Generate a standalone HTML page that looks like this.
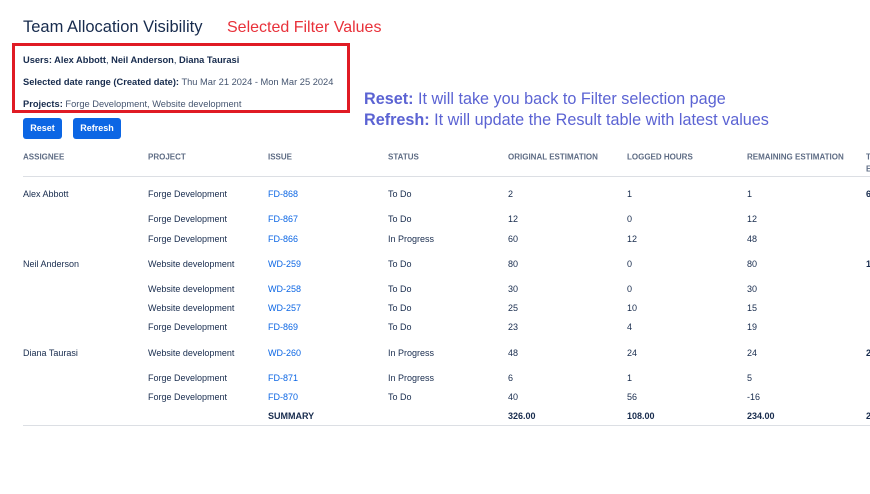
<!DOCTYPE html>
<html><head><meta charset="utf-8"><style>
body{margin:0;width:870px;height:494px;background:#fff;position:relative;overflow:hidden;font-family:"Liberation Sans",sans-serif;color:#172b4d}
.a{position:absolute;white-space:nowrap}
.t{font-size:9px;transform:translateY(-50%)}
.h{font-size:8px;color:#5e6c84;font-weight:bold;transform:translateY(-50%)}
.l{color:#0c66e4}
.b{font-weight:bold}
.m{font-size:9.3px}
</style></head><body>
<div class="a" style="left:23px;top:18px;font-size:16.5px;color:#172b4d">Team Allocation Visibility</div>
<div class="a" style="left:227px;top:19px;font-size:16px;color:#e8313a">Selected Filter Values</div>
<div class="a" style="left:12px;top:43px;width:332px;height:64px;border:3px solid #e01b24"></div>
<div class="a t m" style="left:23px;top:60px"><b>Users: Alex Abbott</b>, <b>Neil Anderson</b>, <b>Diana Taurasi</b></div>
<div class="a t m" style="left:23px;top:82px"><b>Selected date range (Created date):</b> <span style="color:#44546f">Thu Mar 21 2024 - Mon Mar 25 2024</span></div>
<div class="a t m" style="left:23px;top:104px"><b>Projects:</b> <span style="color:#44546f">Forge Development, Website development</span></div>
<div class="a" style="left:364px;top:89px;font-size:16.2px;color:#5b63d3;line-height:21px"><b>Reset:</b> It will take you back to Filter selection page<br><b>Refresh:</b> It will update the Result table with latest values</div>
<div class="a" style="left:23px;top:118px;width:39px;height:21px;background:#0c66e4;border-radius:3px;color:#fff;font-size:9px;font-weight:bold;text-align:center;line-height:21px">Reset</div>
<div class="a" style="left:73px;top:118px;width:48px;height:21px;background:#0c66e4;border-radius:3px;color:#fff;font-size:9px;font-weight:bold;text-align:center;line-height:21px">Refresh</div>
<div class="a h" style="left:23px;top:157px">ASSIGNEE</div>
<div class="a h" style="left:148px;top:157px">PROJECT</div>
<div class="a h" style="left:268px;top:157px">ISSUE</div>
<div class="a h" style="left:388px;top:157px">STATUS</div>
<div class="a h" style="left:508px;top:157px">ORIGINAL ESTIMATION</div>
<div class="a h" style="left:627px;top:157px">LOGGED HOURS</div>
<div class="a h" style="left:747px;top:157px">REMAINING ESTIMATION</div>
<div class="a h" style="left:866px;top:157px">T</div>
<div class="a h" style="left:866px;top:169px">E</div>
<div class="a" style="left:23px;top:176px;width:847px;height:1px;background:#dcdfe4"></div>
<div class="a" style="left:23px;top:425px;width:847px;height:1px;background:#dcdfe4"></div>
<div id="rows"></div>
<script>
var r=[[194,"Alex Abbott","Forge Development","FD-868","To Do","2","1","1","6"],
[219,"","Forge Development","FD-867","To Do","12","0","12",""],
[239,"","Forge Development","FD-866","In Progress","60","12","48",""],
[264,"Neil Anderson","Website development","WD-259","To Do","80","0","80","1"],
[289,"","Website development","WD-258","To Do","30","0","30",""],
[308,"","Website development","WD-257","To Do","25","10","15",""],
[327,"","Forge Development","FD-869","To Do","23","4","19",""],
[353,"Diana Taurasi","Website development","WD-260","In Progress","48","24","24","2"],
[378,"","Forge Development","FD-871","In Progress","6","1","5",""],
[397,"","Forge Development","FD-870","To Do","40","56","-16",""]];
var xs=[23,148,268,388,508,627,747,866],h="";
r.forEach(function(w){for(var i=1;i<9;i++){if(!w[i])continue;var c="a t"+(i==3?" l":"")+(i==8?" b":"");h+='<div class="'+c+'" style="left:'+xs[i-1]+'px;top:'+w[0]+'px">'+w[i]+'</div>';}});
[["SUMMARY",268],["326.00",508],["108.00",627],["234.00",747],["2",866]].forEach(function(s){h+='<div class="a t b" style="left:'+s[1]+'px;top:416px">'+s[0]+'</div>';});
document.getElementById("rows").innerHTML=h;
</script>
</body></html>
